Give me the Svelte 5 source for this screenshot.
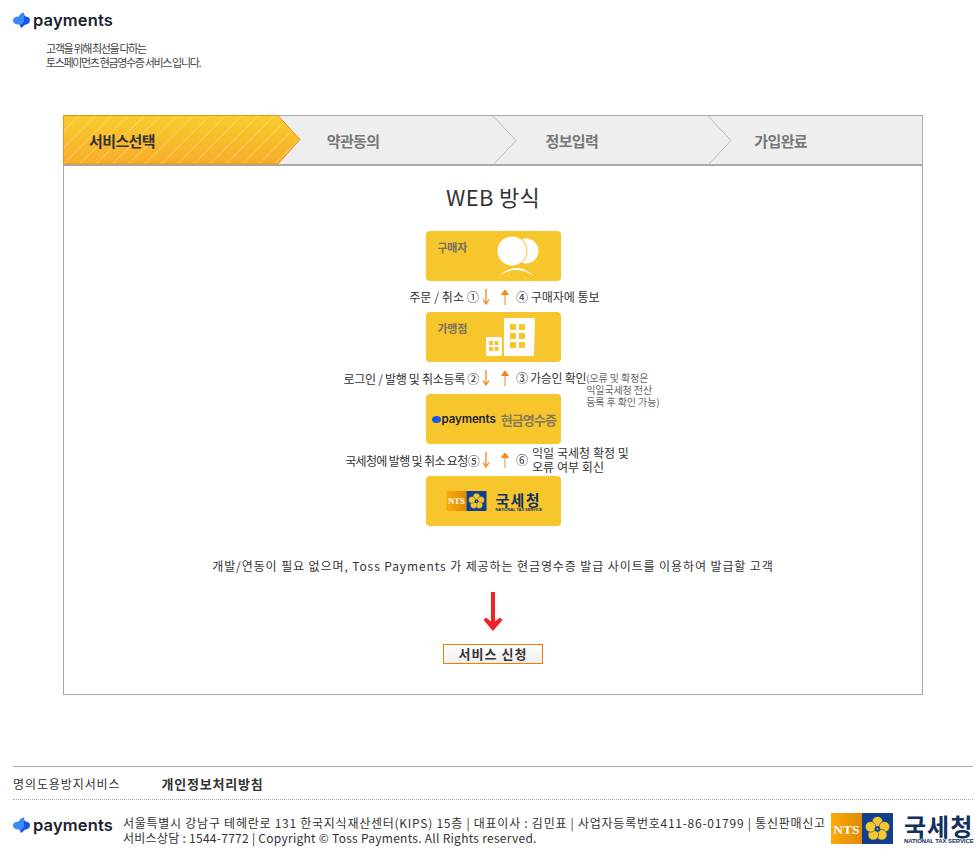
<script>
	let steps = [
		{ label: '서비스선택', active: true },
		{ label: '약관동의' },
		{ label: '정보입력' },
		{ label: '가입완료' }
	];
</script>

{#snippet tossMark()}
	<svg class="toss-mark" width="17" height="16" viewBox="0 0 17 16">
		<path d="M11 0.500C8 1 6.500 2.500 6 4.500C2.500 4.500 0 6 0 8.500C0 11 2.500 12.500 6 12.500C9 12.500 11 10 11 7Z" fill="#3a8bf7" />
		<path d="M11 0.500C11 3.500 12 4.500 14 4.800C16 5.300 17 6.500 17 8.500C17 11 15 12 13 12.500C10.500 13 10.500 15 8 16C7.500 14.500 7 13 6 12.500C9 12.500 11 10 11 7Z" fill="#1b53e4" />
	</svg>
{/snippet}

{#snippet ntsMark(w, h)}
	<svg width={w} height={h} viewBox="0 0 62 31">
		<defs>
			<linearGradient id="nts-orange" x1="0" x2="1">
				<stop offset="0" stop-color="#fbaa06" />
				<stop offset="1" stop-color="#e08a0a" />
			</linearGradient>
		</defs>
		<rect width="31" height="31" fill="url(#nts-orange)" />
		<rect x="31" width="31" height="31" fill="#123f8c" />
		<text x="15.500" y="20.500" text-anchor="middle" class="nts-text">NTS</text>
		<g fill="#f7c92c" stroke="#123f8c" stroke-width="0.600">
			<circle cx="46.500" cy="8.800" r="5.300" />
			<circle cx="53.400" cy="13.800" r="5.300" />
			<circle cx="50.700" cy="21.800" r="5.300" />
			<circle cx="42.300" cy="21.800" r="5.300" />
			<circle cx="39.600" cy="13.800" r="5.300" />
		</g>
		<circle cx="46.500" cy="16" r="2.800" fill="#123f8c" />
		<circle cx="46.500" cy="16" r="0.800" fill="#f7e9a8" />
	</svg>
{/snippet}

{#snippet arrowPair()}
	<div class="arrows">
		<svg width="10" height="16" viewBox="0 0 10 16"><path d="M5 0V14M2 10.500L5 15L8 10.500" fill="none" stroke="#f5851f" stroke-width="1.300" /></svg>
		<svg width="10" height="16" viewBox="0 0 10 16"><path d="M5 16V2M1.500 5.500H8.500L5 1Z" fill="#f5851f" stroke="#f5851f" /></svg>
	</div>
{/snippet}

<div class="page">
	<header class="top">
		<div class="logo">
			{@render tossMark()}
			<span class="logo-word">payments</span>
		</div>
		<p class="intro">고객을 위해 최선을 다하는<br />토스페이먼츠 현금영수증 서비스 입니다.</p>
	</header>

	<section class="wizard">
		<div class="steps">
			<svg class="active-bg" width="240" height="50" viewBox="0 0 240 50">
				<defs>
					<linearGradient id="step-fill" x1="0" y1="0" x2="0" y2="1">
						<stop offset="0" stop-color="#f8cc2e" />
						<stop offset="1" stop-color="#f7ad2a" />
					</linearGradient>
					<pattern id="step-stripes" width="11.500" height="15" patternUnits="userSpaceOnUse" patternTransform="rotate(45)">
						<rect width="1" height="15" fill="#ffffff" opacity="0.25" />
					</pattern>
				</defs>
				<path d="M0.500 0.500H215L237 24.500L215 49H0.500Z" fill="url(#step-fill)" />
				<path d="M0.500 0.500H215L237 24.500L215 49H0.500Z" fill="url(#step-stripes)" stroke="#f58d1e" stroke-width="1" />
			</svg>
			{#each steps as step, i}
				<div class="step step-{i}" class:active={step.active}>
					<span>{step.label}</span>
					{#if i > 0 && i < 3}
						<svg class="chev" width="26" height="50" viewBox="0 0 26 50">
							<path d="M1 0L24 24.500L1 49" fill="none" stroke="#bcbcbc" />
						</svg>
					{/if}
				</div>
			{/each}
		</div>

		<h1>WEB 방식</h1>

		<div class="flow">
			<div class="card">
				<span class="card-label">구매자</span>
				<svg class="card-icon" width="44" height="42" viewBox="0 0 44 42">
					<circle cx="29" cy="15" r="12.500" fill="#fff" />
					<circle cx="15" cy="15" r="15.500" fill="#f7c52c" />
					<circle cx="15" cy="15" r="14.500" fill="#fff" />
					<path d="M2 40Q19.500 24 37 40Q19.500 28 2 40Z" fill="#fff" />
				</svg>
			</div>
			<div class="link-row">
				<div class="left">주문 / 취소 ①</div>
				{@render arrowPair()}
				<div class="right">④ 구매자에 통보</div>
			</div>

			<div class="card">
				<span class="card-label">가맹점</span>
				<svg class="card-icon shop" width="52" height="40" viewBox="0 0 52 40">
					<path d="M18 1Q18 0 19 0H48Q49 0 49 1L48 37Q48 38 47 38H19Q18 38 18 37Z" fill="#fff" />
					<rect x="0" y="19" width="16" height="19" rx="2" fill="#fff" />
					<g fill="#f7c52c">
						<rect x="24" y="6" width="6" height="6" /><rect x="33" y="6" width="6" height="6" />
						<rect x="24" y="15" width="6" height="6" /><rect x="33" y="15" width="6" height="6" />
						<rect x="24" y="24" width="6" height="6" /><rect x="33" y="24" width="6" height="6" />
						<rect x="3" y="23" width="4" height="4" /><rect x="8.500" y="23" width="4" height="4" />
						<rect x="3" y="29" width="4" height="4" /><rect x="8.500" y="29" width="4" height="4" />
					</g>
				</svg>
			</div>
			<div class="link-row tall">
				<div class="left snug">로그인 / 발행 및 취소등록 ②</div>
				{@render arrowPair()}
				<div class="right">
					<span class="snug">③ 가승인 확인</span>
					<span class="note">(오류 및 확정은<br />익일국세청 전산<br />등록 후 확인 가능)</span>
				</div>
			</div>

			<div class="card center">
				<span class="dot"></span>
				<span class="mini-word">payments</span>
				<span class="mini-label">현금영수증</span>
			</div>
			<div class="link-row tall">
				<div class="left tight">국세청에 발행 및 취소 요청⑤</div>
				{@render arrowPair()}
				<div class="right">
					<span class="circled">⑥</span>
					<span class="reply">익일 국세청 확정 및<br />오류 여부 회신</span>
				</div>
			</div>

			<div class="card center nts">
				{@render ntsMark(41, 20)}
				<div class="nts-name small">
					<strong>국세청</strong>
					<em>NATIONAL TAX SERVICE</em>
				</div>
			</div>
		</div>

		<p class="desc">개발/연동이 필요 없으며, Toss Payments 가 제공하는 현금영수증 발급 사이트를 이용하여 발급할 고객</p>

		<svg class="red-arrow" width="20" height="40" viewBox="0 0 20 40">
			<path d="M10 0V34" stroke="#ee2227" stroke-width="4" fill="none" />
			<path d="M0.500 28L3 25.500L10 31L17 25.500L19.500 28L10 39Z" fill="#ee2227" />
		</svg>

		<button class="apply">서비스 신청</button>
	</section>

	<footer>
		<nav>
			<span>명의도용방지서비스</span>
			<strong>개인정보처리방침</strong>
		</nav>
		<div class="foot-info">
			<div class="logo foot-logo">
				{@render tossMark()}
				<span class="logo-word">payments</span>
			</div>
			<p>
				<span class="line-a">서울특별시 강남구 테헤란로 131 한국지식재산센터(KIPS) 15층 | 대표이사 : 김민표 | 사업자등록번호411-86-01799 | 통신판매신고</span>
				<span class="line-b">서비스상담 : 1544-7772 | Copyright © Toss Payments. All Rights reserved.</span>
			</p>
			<div class="foot-nts">
				{@render ntsMark(62, 31)}
				<div class="nts-name">
					<strong>국세청</strong>
					<em>NATIONAL TAX SERVICE</em>
				</div>
			</div>
		</div>
	</footer>
</div>

<style>
	:global(body) {
		background: #fff;
		font-family: "Noto Sans CJK KR", "Liberation Sans", sans-serif;
		color: #333;
	}

	.page {
		width: 979px;
		height: 867px;
		overflow: hidden;
	}

	.top {
		height: 115px;
		padding: 12px 0 0 13px;
		box-sizing: border-box;
	}

	.logo {
		display: flex;
		align-items: center;
		gap: 3px;
		height: 16px;
	}

	.logo-word {
		font-family: Inter, sans-serif;
		font-weight: 600;
		font-size: 16.500px;
		letter-spacing: 0.150px;
		line-height: 16px;
		color: #1b2233;
	}

	.intro {
		margin: 13px 0 0 33px;
		font-size: 11px;
		line-height: 14px;
		letter-spacing: -1.350px;
		color: #444;
	}

	.wizard {
		margin-left: 63px;
		width: 860px;
		height: 580px;
		box-sizing: border-box;
		border: 1px solid #aaa;
		display: flex;
		flex-direction: column;
		align-items: center;
	}

	.steps {
		position: relative;
		width: 100%;
		height: 50px;
		display: flex;
		flex: none;
		box-sizing: border-box;
		background: #eee;
		border-bottom: 2px solid #aaa;
	}

	.active-bg {
		position: absolute;
		left: -1px;
		top: -1px;
	}

	.step {
		position: relative;
		display: flex;
		align-items: center;
		box-sizing: border-box;
		height: 48px;
		font-size: 15px;
		font-weight: 700;
		letter-spacing: -0.600px;
		color: #777;
	}

	.step.active {
		color: #333;
	}

	.step-0 { width: 214px; padding-left: 25px; }
	.step-1 { width: 215px; padding-left: 49px; }
	.step-2 { width: 215px; padding-left: 53px; }
	.step-3 { width: 215px; padding-left: 47px; }

	.chev {
		position: absolute;
		right: -26px;
		top: 0;
	}

	h1 {
		margin: 15px 0 0;
		font-size: 22px;
		line-height: 30px;
		font-weight: 400;
		color: #333;
		letter-spacing: 0.300px;
	}

	.flow {
		margin-top: 20px;
		width: 100%;
		display: flex;
		flex-direction: column;
		align-items: center;
	}

	.card {
		position: relative;
		width: 135px;
		height: 50px;
		flex: none;
		box-sizing: border-box;
		border-radius: 4px;
		background: #f7c52c;
		padding: 9px 0 0 12px;
	}

	.card-label {
		font-size: 11px;
		line-height: 15px;
		font-weight: 700;
		color: #777260;
		display: block;
		letter-spacing: -0.300px;
	}

	.card-icon {
		position: absolute;
		right: 20px;
		top: 5px;
	}

	.card-icon.shop {
		right: 23px;
		top: 6px;
	}

	.card.center {
		display: flex;
		align-items: center;
		padding: 0 0 0 6px;
	}

	.dot {
		width: 9px;
		height: 7px;
		border-radius: 50%;
		background: #1b53e4;
		margin-right: 1px;
	}

	.mini-word {
		font-family: Inter, sans-serif;
		font-weight: 600;
		font-size: 11.500px;
		letter-spacing: -0.100px;
		color: #1b2233;
	}

	.mini-label {
		margin-left: 5px;
		font-size: 13px;
		font-weight: 700;
		letter-spacing: -0.900px;
		color: #85795a;
		white-space: nowrap;
	}

	.card.nts {
		padding: 0 0 0 20px;
		gap: 9px;
	}

	.link-row {
		width: 100%;
		height: 31px;
		flex: none;
		display: grid;
		grid-template-columns: 415px 37px 1fr;
		align-items: center;
		font-size: 12px;
		color: #333;
		white-space: nowrap;
	}

	.link-row.tall {
		height: 32px;
	}

	.left {
		text-align: right;
		letter-spacing: 0.100px;
	}

	.left.snug {
		letter-spacing: -0.300px;
	}

	.left.tight {
		letter-spacing: -0.650px;
	}

	.arrows {
		display: flex;
		justify-content: space-between;
		padding: 0 6px 0 2px;
	}

	.right {
		display: flex;
		align-items: flex-start;
		height: 16px;
		line-height: 16px;
	}

	.right .snug {
		letter-spacing: -0.300px;
	}

	.note {
		font-size: 10px;
		line-height: 12px;
		color: #666;
		letter-spacing: -0.100px;
		margin-top: 2px;
	}

	.circled {
		margin-right: 4px;
	}

	.reply {
		line-height: 14px;
		margin-top: -6px;
		letter-spacing: 0.050px;
	}

	.desc {
		margin: 32px 0 0;
		font-size: 12px;
		line-height: 16px;
		letter-spacing: 0.900px;
		color: #333;
	}

	.red-arrow {
		margin-top: 18px;
		flex: none;
	}

	.apply {
		margin-top: 12px;
		width: 100px;
		height: 20px;
		padding: 0;
		border: 1px solid #f57c00;
		background: linear-gradient(#fff, #eee);
		font-family: inherit;
		font-size: 13px;
		font-weight: 700;
		letter-spacing: 1px;
		color: #333;
		line-height: 18px;
	}

	footer {
		margin: 71px 0 0 13px;
		width: 960px;
		border-top: 1px solid #aaa;
	}

	nav {
		height: 33px;
		box-sizing: border-box;
		border-bottom: 1px dotted #aaa;
		display: flex;
		align-items: center;
		font-size: 12px;
		gap: 41px;
		letter-spacing: 0.900px;
	}

	nav strong {
		font-size: 13px;
		letter-spacing: 0.800px;
	}

	.foot-info {
		display: flex;
		align-items: flex-start;
		padding-top: 12px;
	}

	.foot-logo {
		flex: none;
		width: 100px;
		margin-top: 5px;
	}

	.foot-info p {
		margin: 3px 0 0 10px;
		width: 708px;
		flex: none;
		font-size: 12px;
		line-height: 15px;
		white-space: nowrap;
		color: #333;
	}

	.foot-info p span {
		display: block;
	}

	.line-a {
		letter-spacing: 0.740px;
	}

	.line-b {
		letter-spacing: 0.270px;
	}

	.foot-nts {
		display: flex;
		gap: 11px;
		align-items: flex-start;
		margin-top: 1px;
		flex: none;
	}

	.nts-name {
		display: flex;
		flex-direction: column;
		width: 68px;
		color: #12305f;
	}

	.nts-name strong {
		font-size: 24px;
		line-height: 25px;
		font-weight: 700;
		letter-spacing: 1px;
		white-space: nowrap;
	}

	.nts-name em {
		font-family: "Liberation Sans", sans-serif;
		font-style: normal;
		font-weight: 700;
		font-size: 6px;
		line-height: 7px;
		white-space: nowrap;
		letter-spacing: -0.100px;
	}

	.nts-name.small {
		width: 46px;
	}

	.nts-name.small strong {
		font-size: 15px;
		line-height: 17px;
		letter-spacing: 1.300px;
	}

	.nts-name.small em {
		font-size: 4px;
		line-height: 4px;
		letter-spacing: -0.050px;
	}

	.nts-text {
		font-family: "Liberation Serif", serif;
		font-weight: 700;
		font-size: 13.500px;
		fill: #fff;
	}
</style>
